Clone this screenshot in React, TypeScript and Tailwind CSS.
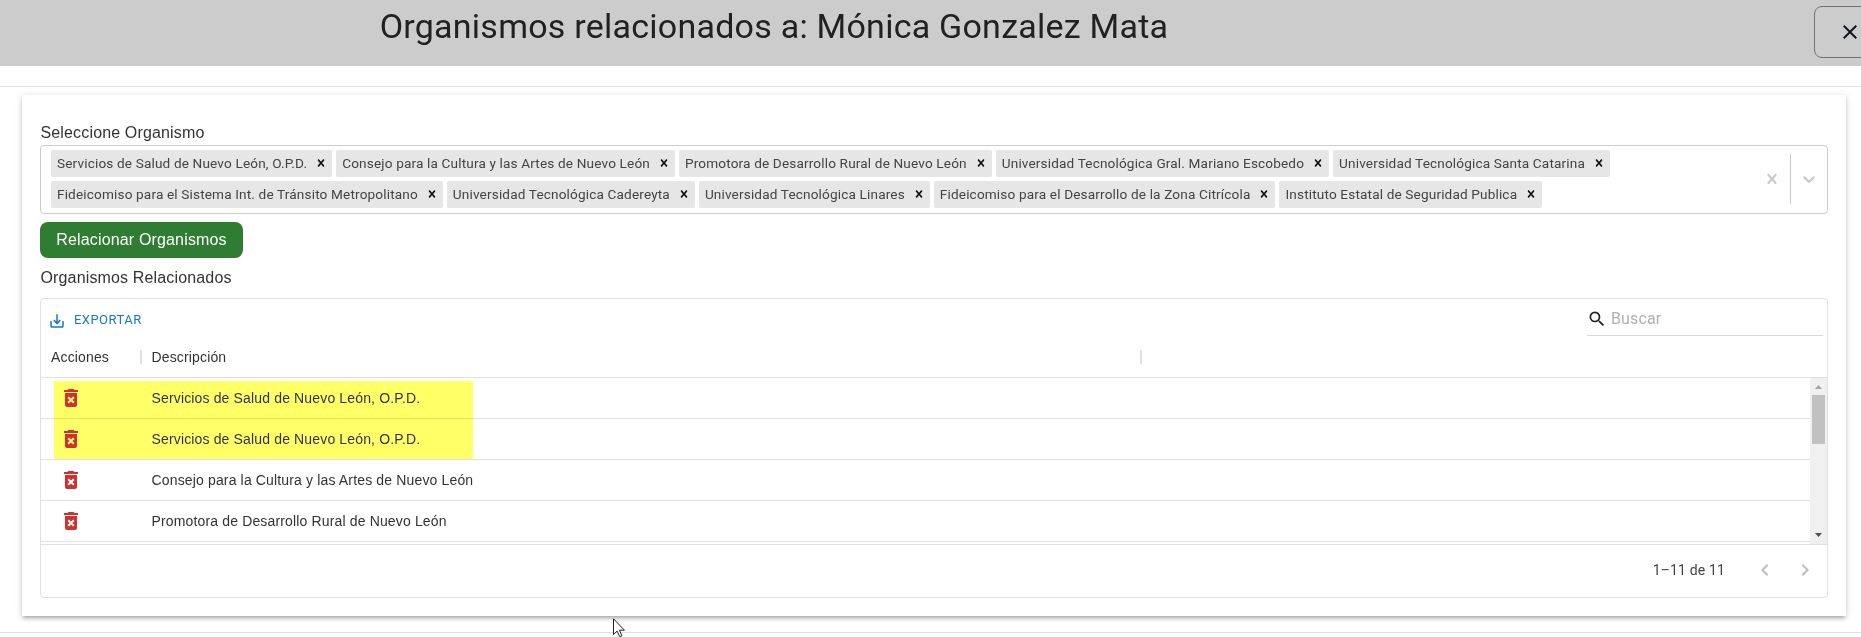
import React from "react";
import {
  MdClose,
  MdDeleteForever,
  MdKeyboardArrowLeft,
  MdKeyboardArrowRight,
  MdSaveAlt,
  MdSearch,
} from "react-icons/md";

const seleccionados = [
  "Servicios de Salud de Nuevo León, O.P.D.",
  "Consejo para la Cultura y las Artes de Nuevo León",
  "Promotora de Desarrollo Rural de Nuevo León",
  "Universidad Tecnológica Gral. Mariano Escobedo",
  "Universidad Tecnológica Santa Catarina",
  "Fideicomiso para el Sistema Int. de Tránsito Metropolitano",
  "Universidad Tecnológica Cadereyta",
  "Universidad Tecnológica Linares",
  "Fideicomiso para el Desarrollo de la Zona Citrícola",
  "Instituto Estatal de Seguridad Publica",
];

const filas = [
  { nombre: "Servicios de Salud de Nuevo León, O.P.D." },
  { nombre: "Servicios de Salud de Nuevo León, O.P.D." },
  { nombre: "Consejo para la Cultura y las Artes de Nuevo León" },
  { nombre: "Promotora de Desarrollo Rural de Nuevo León" },
];

function Cruz({ size }: { size: number }) {
  return (
    <svg width={size} height={size} viewBox="0 0 20 20" fill="currentColor">
      <path d="M14.348 14.849c-0.469 0.469-1.229 0.469-1.697 0l-2.651-3.030-2.651 3.029c-0.469 0.469-1.229 0.469-1.697 0-0.469-0.469-0.469-1.229 0-1.697l2.758-3.150-2.759-3.152c-0.469-0.469-0.469-1.228 0-1.697s1.228-0.469 1.697 0l2.652 3.031 2.651-3.031c0.469-0.469 1.228-0.469 1.697 0s0.469 1.229 0 1.697l-2.758 3.152 2.758 3.150c0.469 0.469 0.469 1.229 0 1.698z" />
    </svg>
  );
}

function Chip({ texto }: { texto: string }) {
  return (
    <div className="m-0.5 flex h-[27px] rounded-[2px] bg-[#e6e6e6]">
      <span className="pl-1.5 pr-[3px] font-[Roboto,sans-serif] text-[13.6px] leading-[26px] tracking-[0.152px] whitespace-nowrap text-[#444]">
        {texto}
      </span>
      <button className="flex w-[22px] items-center justify-center pb-px text-[#111]">
        <Cruz size={14} />
      </button>
    </div>
  );
}

function Selector() {
  return (
    <div className="flex h-[69px] rounded-[4px] border border-[#ccc] bg-white">
      <div className="flex flex-1 flex-wrap content-start px-2 pt-[2px]">
        {seleccionados.map((s) => (
          <Chip key={s} texto={s} />
        ))}
      </div>
      <div className="flex w-[107px] shrink-0 items-center justify-end pb-px">
        <span className="flex w-9 justify-center text-[#ccc]">
          <Cruz size={20} />
        </span>
        <span className="my-2 w-px self-stretch bg-[#ccc]" />
        <span className="flex w-9 justify-center text-[#ccc]">
          <svg width="20" height="20" viewBox="0 0 20 20" fill="currentColor">
            <path d="M4.516 7.548c0.436-0.446 1.043-0.481 1.576 0l3.908 3.747 3.908-3.747c0.533-0.481 1.141-0.446 1.574 0 0.436 0.445 0.408 1.197 0 1.615-0.406 0.418-4.695 4.502-4.695 4.502-0.217 0.223-0.502 0.335-0.787 0.335s-0.57-0.112-0.789-0.335c0 0-4.287-4.084-4.695-4.502s-0.436-1.17 0-1.615z" />
          </svg>
        </span>
      </div>
    </div>
  );
}

function BarraDesplazamiento() {
  return (
    <div className="flex w-[17px] shrink-0 flex-col items-center bg-[#f0f0f0]">
      <svg width="17" height="17" viewBox="0 0 17 17" fill="#a3a3a3">
        <path d="M5 11h7L8.500 7z" />
      </svg>
      <div className="h-[49px] w-[13px] bg-[#c1c1c1]" />
      <svg className="mt-auto" width="17" height="17" viewBox="0 0 17 17" fill="#505050">
        <path d="M5 6h7L8.500 10z" />
      </svg>
    </div>
  );
}

function Tabla() {
  return (
    <div className="mt-[6px] flex h-[300px] flex-col rounded-[4px] border border-[#e0e0e0] font-['Liberation_Sans',sans-serif] text-sm tracking-[0.15px] text-[#333]">
      <div className="flex h-[38px] justify-between pr-1 pl-[7px]">
        <button className="flex items-center gap-2 pt-1 font-[Roboto,sans-serif] text-[13px] tracking-[0.46px] text-[#1976d2]">
          <MdSaveAlt size={18} className="mt-0.5" />
          EXPORTAR
        </button>
        <div className="flex h-[37px] w-[236px] items-center gap-1 border-b border-[#d8d8d8] pt-1 font-[Roboto,sans-serif] text-base text-[#b0b0b0]">
          <MdSearch size={20} className="text-[#222]" />
          Buscar
        </div>
      </div>
      <div className="flex h-[41px] shrink-0 items-center border-b border-[#e0e0e0]">
        <span className="w-[99px] pl-[10px]">Acciones</span>
        <span className="h-[14px] w-[2px] bg-[#e0e0e0]" />
        <span className="w-[998px] pl-[9.500px]">Descripción</span>
        <span className="h-[14px] w-[2px] bg-[#e0e0e0]" />
      </div>
      <div className="flex h-[166px] shrink-0">
        <div className="relative flex-1">
          {filas.map((f, i) => (
            <div key={i} className="flex h-[41px] items-center border-b border-[#e0e0e0]">
              <span className="w-[110.500px] pl-[18px]">
                <MdDeleteForever size={24} className="text-[#d32f2f]" />
              </span>
              <span>{f.nombre}</span>
            </div>
          ))}
          <div className="absolute top-[3px] left-[13px] h-[78px] w-[419px] bg-[#ffff66] mix-blend-darken" />
        </div>
        <BarraDesplazamiento />
      </div>
      <div className="flex flex-1 items-center justify-end border-t border-[#e0e0e0] pb-0.5 font-[Roboto,sans-serif] text-[#444]">
        <span className="mr-[28px]">1–11 de 11</span>
        <MdKeyboardArrowLeft size={24} className="mr-4 text-[#bdbdbd]" />
        <MdKeyboardArrowRight size={24} className="mr-[10px] text-[#bdbdbd]" />
      </div>
    </div>
  );
}

export default function App() {
  return (
    <div className="relative h-[637px] w-[1861px] overflow-hidden bg-white text-[#212121]">
      <header className="flex h-[66px] bg-[#ccc]">
        <h1 className="w-[1548px] shrink-0 pt-[5px] text-center font-[Roboto,sans-serif] text-[34px] leading-[42px] tracking-[0.24px]">
          Organismos relacionados a: Mónica Gonzalez Mata
        </h1>
        <div className="flex flex-1 justify-end">
          <button className="mt-[6px] -mr-[25px] flex h-[52px] w-[72px] shrink-0 items-center justify-center rounded-lg border border-[#6b7572] text-[#0c1a1e]">
            <MdClose size={24} />
          </button>
        </div>
      </header>
      <div className="h-[21px] border-b border-[#e0e0e0]" />
      <main className="mt-2 mr-[15px] ml-[22px] h-[521px] bg-white px-[18px] pt-[25px] shadow-[0_3px_3px_-2px_rgba(0,0,0,0.2),0_3px_4px_0_rgba(0,0,0,0.14),0_1px_8px_0_rgba(0,0,0,0.12)]">
        <p className="h-[25px] pl-[0.500px] font-['Liberation_Sans',sans-serif] text-base leading-[25px] tracking-[0.15px] text-[#333]">
          Seleccione Organismo
        </p>
        <Selector />
        <button className="mt-2 flex h-9 w-[203px] items-center justify-center rounded-lg bg-[#2e7d32] font-['Liberation_Sans',sans-serif] text-base tracking-[0.16px] text-white">
          Relacionar Organismos
        </button>
        <p className="mt-[10px] h-6 pl-[0.500px] font-['Liberation_Sans',sans-serif] text-base leading-[20px] tracking-[0.15px] text-[#333]">
          Organismos Relacionados
        </p>
        <Tabla />
      </main>
      <div className="mt-4 h-px bg-[#e0e0e0]" />
      <svg
        className="absolute top-[618px] left-[613px]"
        width="13"
        height="20"
        viewBox="0 0 13 20"
        fill="white"
        stroke="#222"
      >
        <path d="M.5.800V16.500l3.600-3.400 2.600 5.600 2.200-1-2.500-5.500h5z" />
      </svg>
    </div>
  );
}
